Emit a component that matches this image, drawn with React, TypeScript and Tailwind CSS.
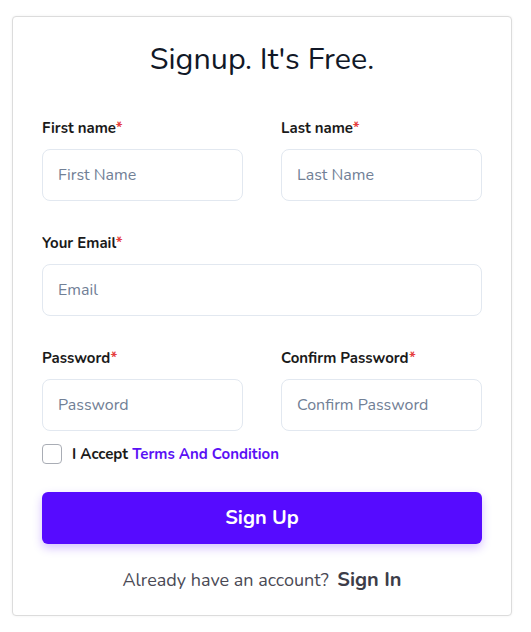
import React from "react";

const font = { fontFamily: 'Nunito, Lato, "Open Sans", sans-serif' };

function Label({ children }: { children: React.ReactNode }) {
  return (
    <label className="block h-5 text-[15px] leading-5 font-bold text-[#1a1a1a]">
      {children}
      <span className="text-[#e53e3e]">*</span>
    </label>
  );
}

function Field({
  label,
  placeholder,
  type = "text",
}: {
  label: string;
  placeholder: string;
  type?: string;
}) {
  return (
    <div className="flex flex-col gap-[11px] min-w-0">
      <Label>{label}</Label>
      <input
        type={type}
        placeholder={placeholder}
        className="h-[52px] w-full rounded-lg border border-[#e2e8f0] px-[15px] text-[16px] text-[#1a202c] placeholder:text-[#718096] outline-none"
      />
    </div>
  );
}

export default function App() {
  return (
    <div className="min-h-[632px] bg-white pt-4 pl-3" style={font}>
      <div className="w-[500px] h-[600px] rounded border border-[#dcdcdc] bg-white shadow-[0_0_3px_rgba(0,0,0,0.06)] px-[29px] pt-[24px]">
        <h1 className="h-9 text-center text-[30.5px] leading-9 text-[#111827]">
          Signup. It's Free.
        </h1>

        <div className="mt-[41px] grid grid-cols-2 gap-x-[38px]">
          <Field label="First name" placeholder="First Name" />
          <Field label="Last name" placeholder="Last Name" />
        </div>

        <div className="mt-[32px]">
          <Field label="Your Email" placeholder="Email" type="email" />
        </div>

        <div className="mt-[32px] grid grid-cols-2 gap-x-[38px]">
          <Field label="Password" placeholder="Password" type="password" />
          <Field label="Confirm Password" placeholder="Confirm Password" type="password" />
        </div>

        <div className="mt-[13px] flex h-5 items-center gap-[10px]">
          <div className="h-5 w-5 shrink-0 rounded border border-[#a9adb5] bg-white" />
          <span className="text-[15px] leading-5 font-bold text-[#1a1a1a]">
            I Accept <span className="text-[#5a10f5]">Terms And Condition</span>
          </span>
        </div>

        <button
          type="button"
          className="mt-[28px] h-[52px] w-full rounded-md bg-[#560bff] text-[20px] font-bold text-white shadow-[0_4px_10px_rgba(86,11,255,0.25)]"
        >
          Sign Up
        </button>

        <p className="mt-[24px] h-6 text-center text-[18px] leading-6 text-[#4a4a55]">
          Already have an account?{" "}
          <span className="ml-1 text-[20px] font-bold text-[#3d3d48]">Sign In</span>
        </p>
      </div>
    </div>
  );
}
